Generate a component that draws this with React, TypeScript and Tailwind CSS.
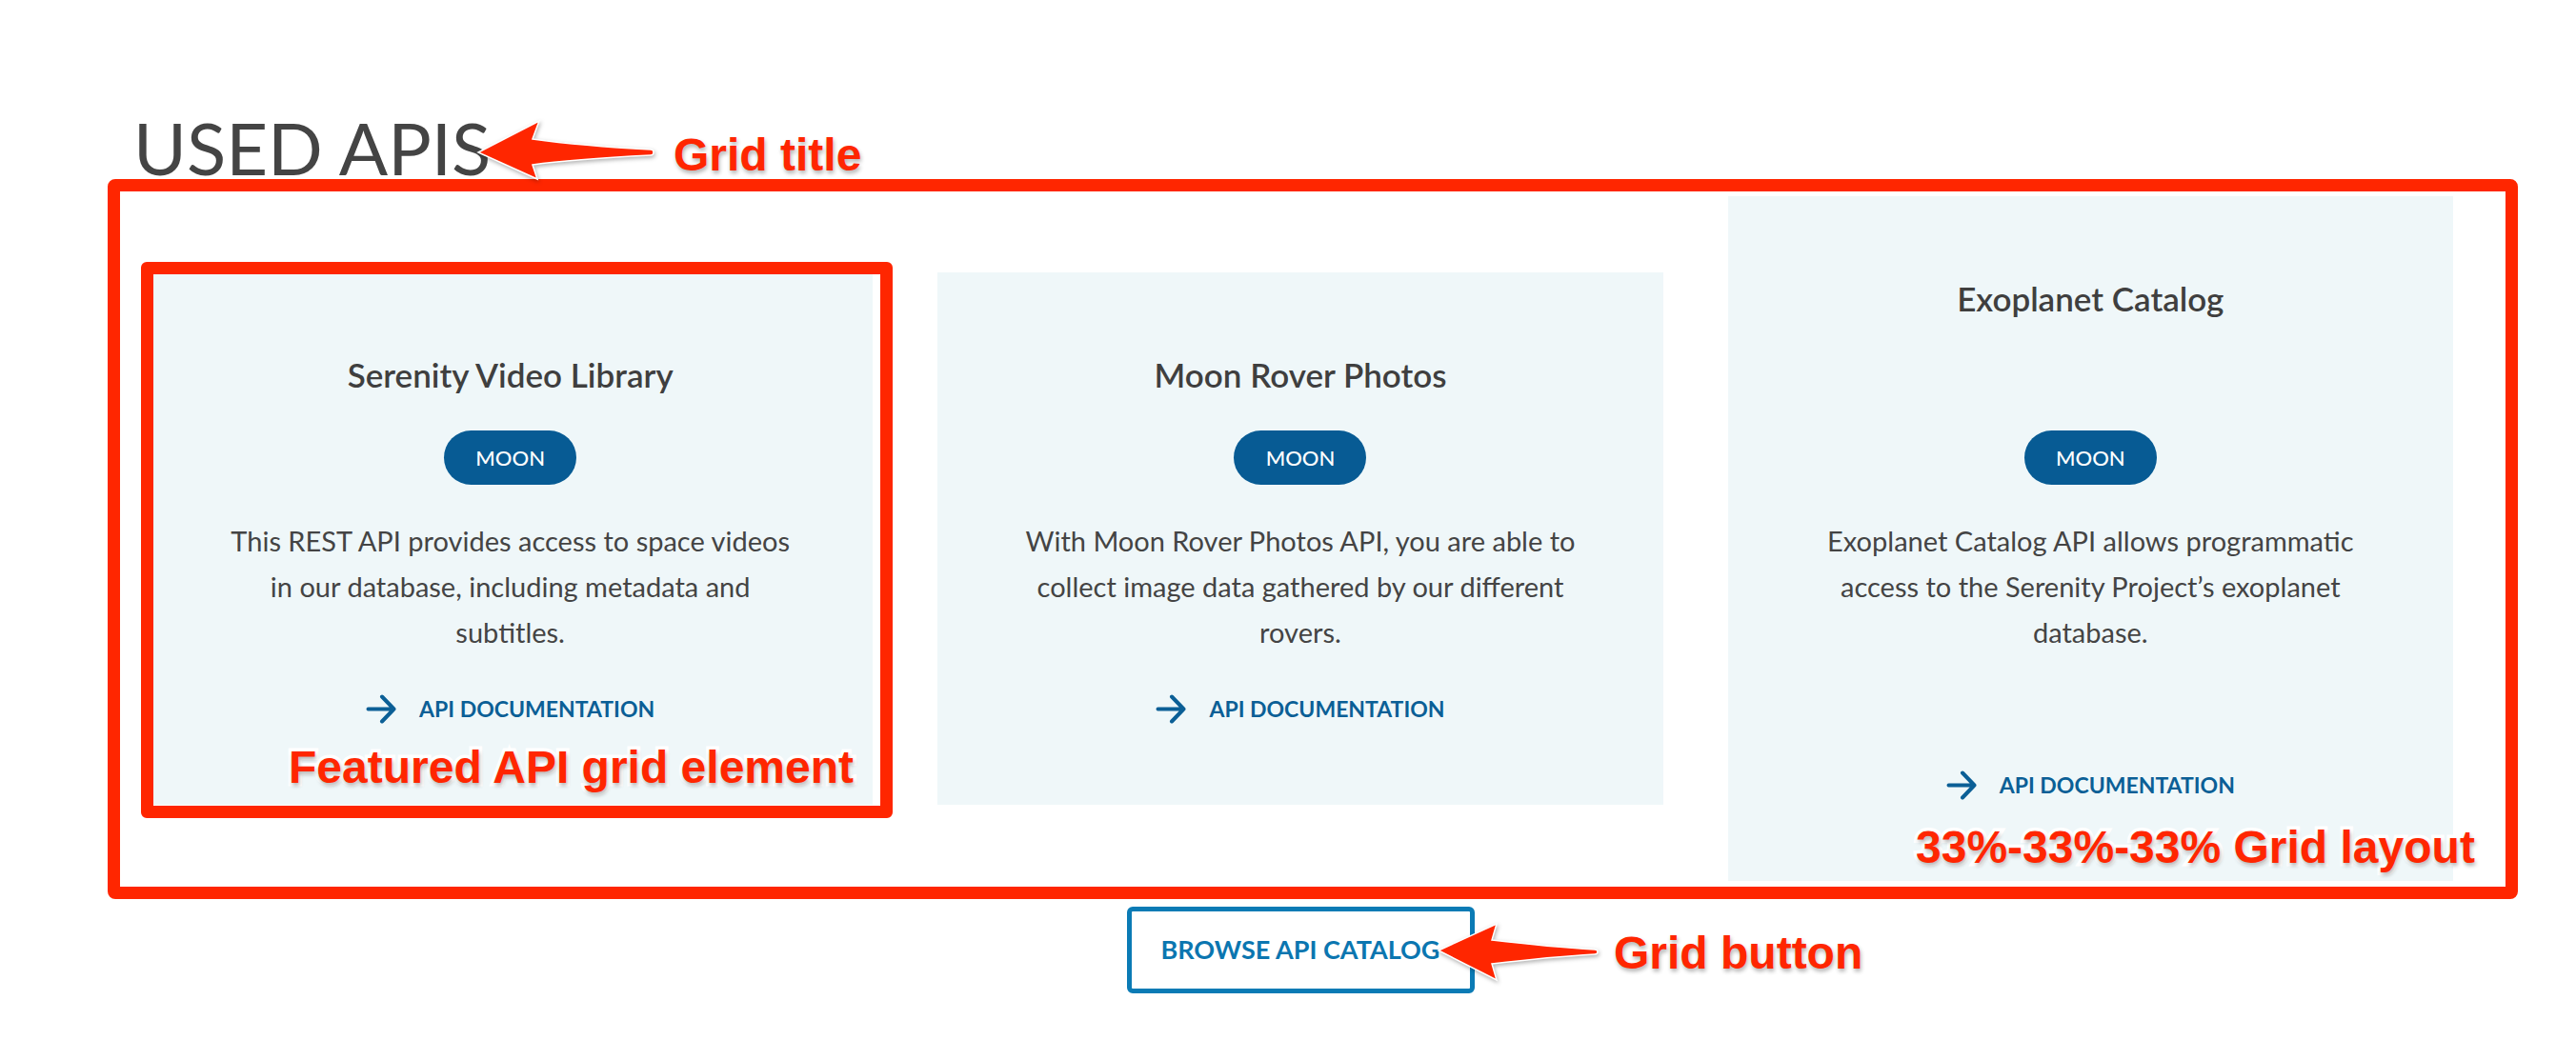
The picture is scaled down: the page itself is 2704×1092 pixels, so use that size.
import React from "react";

type Api = {
  name: string;
  tag: string;
  lines: string[];
  tall?: boolean;
};

const APIS: Api[] = [
  {
    name: "Serenity Video Library",
    tag: "MOON",
    lines: [
      "This REST API provides access to space videos",
      "in our database, including metadata and",
      "subtitles.",
    ],
  },
  {
    name: "Moon Rover Photos",
    tag: "MOON",
    lines: [
      "With Moon Rover Photos API, you are able to",
      "collect image data gathered by our different",
      "rovers.",
    ],
  },
  {
    name: "Exoplanet Catalog",
    tag: "MOON",
    lines: [
      "Exoplanet Catalog API allows programmatic",
      "access to the Serenity Project\u2019s exoplanet",
      "database.",
    ],
    tall: true,
  },
];

function ArrowIcon() {
  return (
    <svg width="32" height="31" viewBox="0 0 32 31" fill="none" aria-hidden>
      <path
        d="M2.5 15.5H29.5M17 2.5L29.5 15.5L17 28.5"
        stroke="#0b5f96"
        strokeWidth="4"
        strokeLinecap="round"
        strokeLinejoin="round"
      />
    </svg>
  );
}

function ApiCard({ api }: { api: Api }) {
  return (
    <div
      className={`flex flex-col items-center bg-[#eff7f9] px-10 pt-[87px] pb-[85px] text-center ${
        api.tall ? "h-[719px]" : ""
      }`}
    >
      <h3 className="text-[35px] leading-[40px] font-semibold text-[#3f3f3f]">{api.name}</h3>

      <div className="flex flex-1 flex-col items-center justify-center pt-[39px] pb-[40px]">
        <span className="flex h-[57px] w-[139px] items-center justify-center rounded-full bg-[#075b94] text-[22px] font-medium text-white">
          {api.tag}
        </span>
        <p className="mt-[35px] text-[29px] leading-[48px] text-[#444444] whitespace-nowrap">
          {api.lines.map((l, i) => (
            <React.Fragment key={i}>
              {l}
              {i < api.lines.length - 1 && <br />}
            </React.Fragment>
          ))}
        </p>
      </div>

      <a href="#" className="flex h-[32px] items-center gap-[24px] text-[23px] font-bold text-[#0b5f96]">
        <ArrowIcon />
        API DOCUMENTATION
      </a>
    </div>
  );
}

/* red callout markup drawn on top of the screenshot */
const note =
  "absolute whitespace-nowrap font-['Liberation_Sans',Arial,sans-serif] text-[48px] leading-[48px] font-bold text-[#ff2600] [paint-order:stroke_fill] [-webkit-text-stroke:7px_#ffffff] [text-shadow:1px_3px_4px_rgba(0,0,0,0.3)]";

function Callouts() {
  return (
    <>
      <div className="pointer-events-none absolute left-[113px] top-[188px] h-[756px] w-[2530px] rounded-[8px] border-[13px] border-[#ff2600]" />
      <div className="pointer-events-none absolute left-[148px] top-[275px] h-[584px] w-[789px] rounded-[6px] border-[13px] border-[#ff2600]" />

      <svg
        className="pointer-events-none absolute left-[495px] top-[120px] drop-shadow-[1px_2px_2px_rgba(0,0,0,0.3)]"
        width="200"
        height="75"
        viewBox="0 0 200 75"
      >
        <path
          d="M7 40 L71 7 L64 26 C100 31 150 35 188 37 C192 37 192 43 188 43 C150 45 100 48 64 53 L69 68 Z"
          fill="#ff2600"
          stroke="#ffffff"
          strokeWidth="1.5"
        />
      </svg>

      <svg
        className="pointer-events-none absolute left-[1500px] top-[960px] drop-shadow-[1px_2px_2px_rgba(0,0,0,0.3)]"
        width="185"
        height="80"
        viewBox="0 0 185 80"
      >
        <path
          d="M10 38 L71 10 L66 27 C100 31 140 35 174 37 C178 37 178 42 174 42 C140 44 100 48 66 52 L71 69 Z"
          fill="#ff2600"
          stroke="#ffffff"
          strokeWidth="1.5"
        />
      </svg>

      <span className={`${note} left-[707px] top-[139px]`}>Grid title</span>
      <span className={`${note} left-[303px] top-[782px]`}>Featured API grid element</span>
      <span className={`${note} left-[2011px] top-[866px]`}>33%-33%-33% Grid layout</span>
      <span className={`${note} left-[1694px] top-[977px]`}>Grid button</span>
    </>
  );
}

export default function App() {
  return (
    <div className="relative h-[1092px] w-[2704px] overflow-hidden bg-white font-[Lato,sans-serif]">
      <section className="pl-[140px] pt-[109px]">
        <h2 className="text-[76px] leading-[91px] font-normal text-[#444444]">USED APIS</h2>

        <div className="ml-[15px] mt-[6px] w-[2420px]">
          <div className="grid grid-cols-3 items-center gap-x-[68px]">
            {APIS.map((api) => (
              <ApiCard key={api.name} api={api} />
            ))}
          </div>

          <div className="mt-[27px] flex justify-center">
            <a
              href="#"
              className="flex h-[91px] w-[365px] items-center justify-center rounded-[6px] border-[5px] border-[#0b7bb5] text-[27px] font-bold text-[#0b76b0]"
            >
              BROWSE API CATALOG
            </a>
          </div>
        </div>
      </section>

      <Callouts />
    </div>
  );
}
